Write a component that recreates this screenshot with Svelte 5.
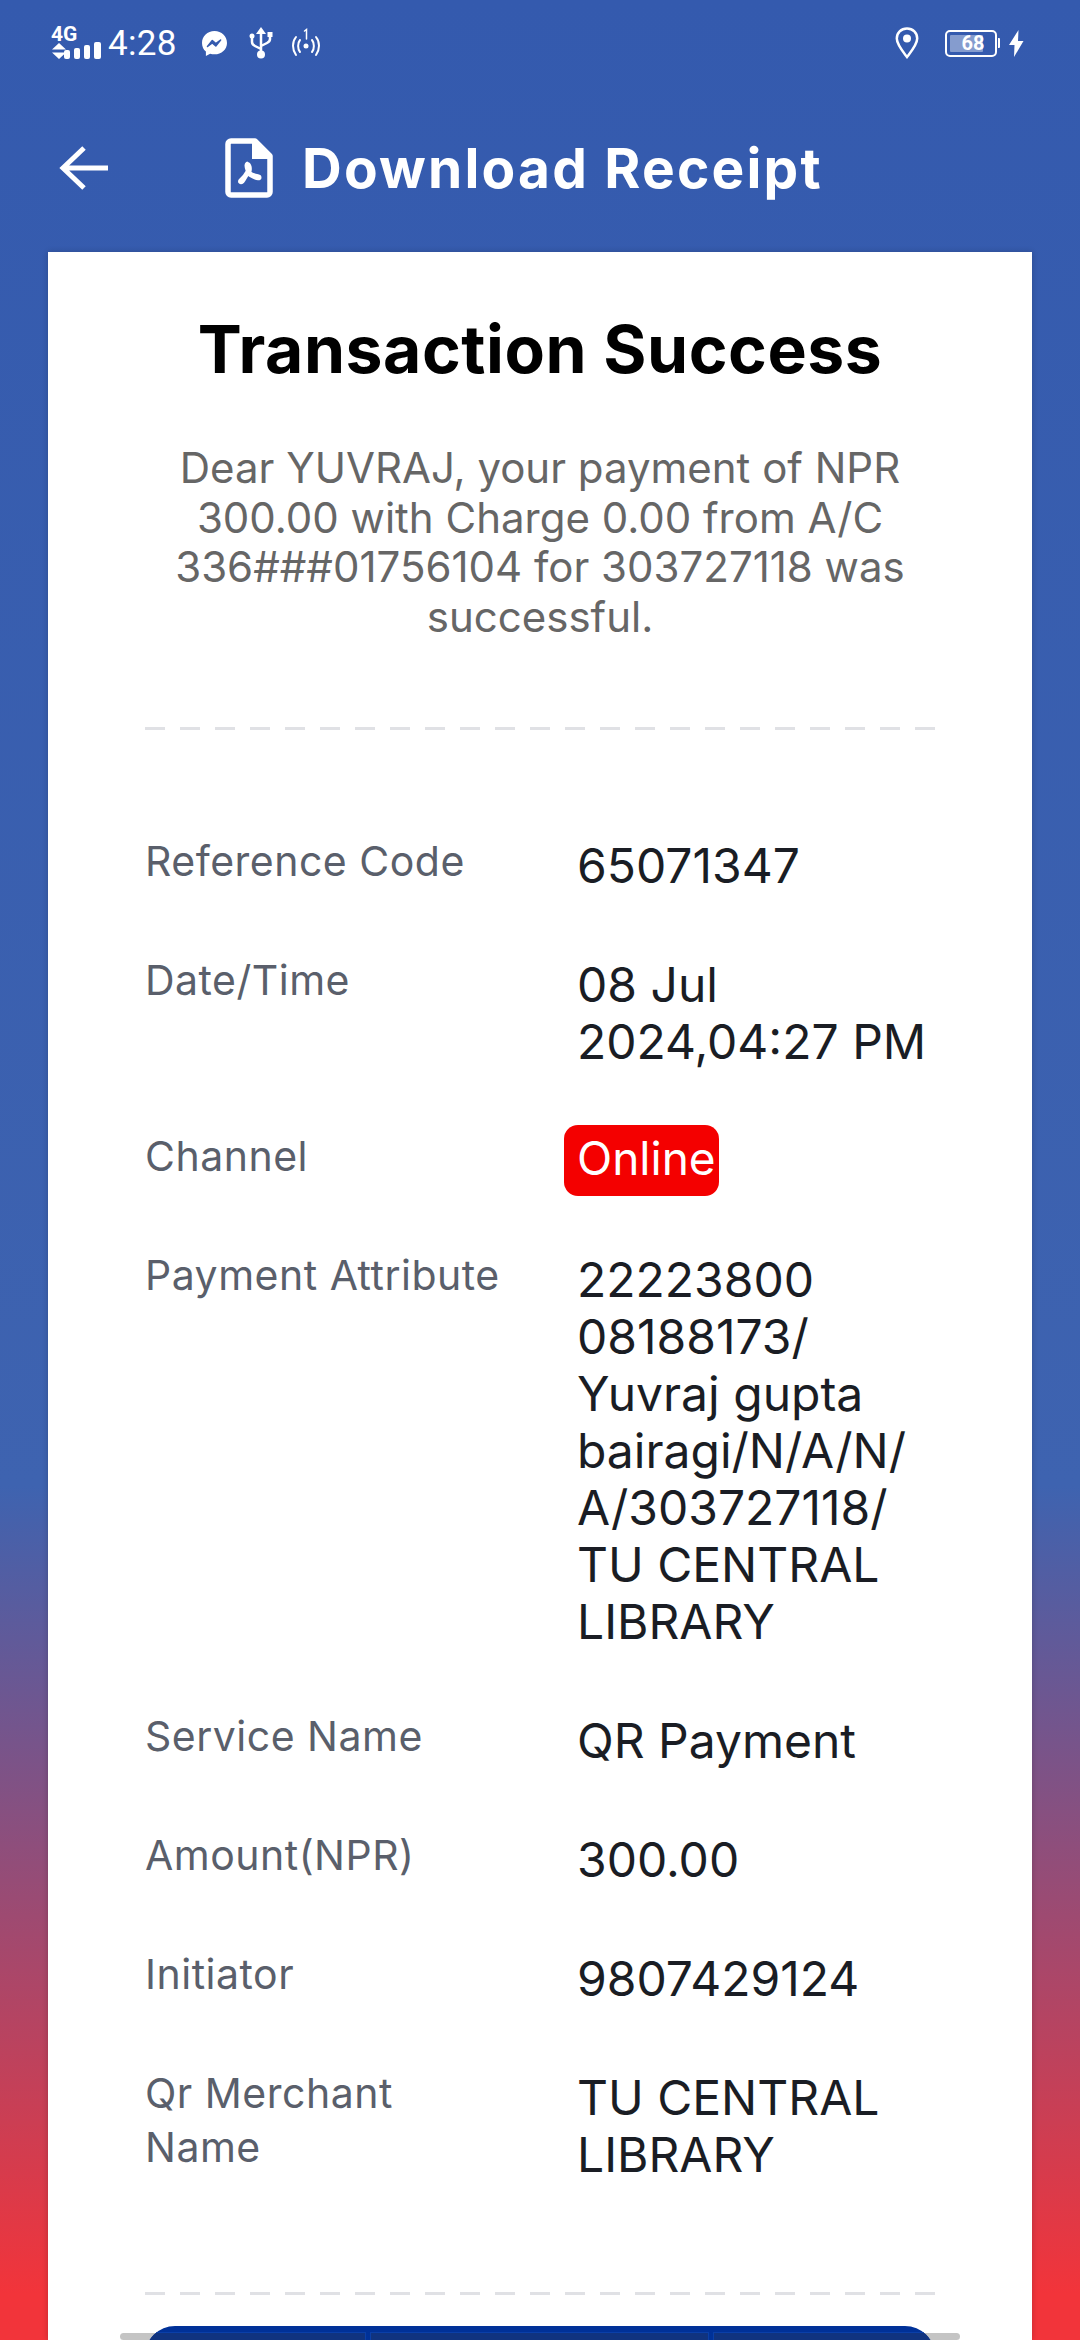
<script>
  const rows = [
    { label: 'Reference Code', value: '65071347' },
    { label: 'Date/Time', value: '08 Jul\n2024,04:27 PM' },
    { label: 'Channel', value: 'Online', badge: true },
    { label: 'Payment Attribute', value: '22223800\n08188173/\nYuvraj gupta\nbairagi/N/A/N/\nA/303727118/\nTU CENTRAL\nLIBRARY' },
    { label: 'Service Name', value: 'QR Payment' },
    { label: 'Amount(NPR)', value: '300.00' },
    { label: 'Initiator', value: '9807429124' },
    { label: 'Qr Merchant\nName', value: 'TU CENTRAL\nLIBRARY' }
  ];
</script>

<div class="page">
  <div class="status">
    <div class="signal">
      <span class="net">4G</span>
      <svg class="arrows" width="16" height="16" viewBox="0 0 16 16"><path d="M8 0l7 6.500H1zM1 9.500h14L8 16z" fill="#fff"/></svg>
      <svg class="bars" width="38" height="18" viewBox="0 0 38 18" fill="#fff">
        <rect x="0" y="9" width="6" height="9" rx="2"/>
        <rect x="10" y="7" width="6" height="11" rx="2"/>
        <rect x="20" y="4" width="6" height="14" rx="2"/>
        <rect x="30" y="1" width="7" height="17" rx="2"/>
      </svg>
    </div>
    <span class="time">4:28</span>
    <svg class="messenger" width="27" height="27" viewBox="0 0 27 27">
      <path d="M13.500 1C6.400 1 1 6.100 1 12.900c0 3.600 1.500 6.600 3.900 8.700V26l4.200-2.300c1.400.4 2.900.6 4.400.6 7.100 0 12.500-5 12.500-11.400S20.600 1 13.500 1z" fill="#fff"/>
      <path d="M6.500 16.500l4.800-6 3.500 3 4.800-3.500-4.800 6-3.500-3z" fill="#345AAE" stroke="#345AAE" stroke-width="1.500" stroke-linejoin="round"/>
    </svg>
    <svg class="usb" width="24" height="32" viewBox="0 0 24 32" fill="none" stroke="#fff" stroke-width="2.500">
      <path d="M12 0l5 7H7z" fill="#fff" stroke="none"/>
      <path d="M12 6v20M3 10v5c0 2 1 3 3 4l6 3M21 8v4c0 2-1 3-3 4l-6 3"/>
      <circle cx="3" cy="9" r="2.500" fill="#fff" stroke="none"/>
      <rect x="18.500" y="5" width="5" height="5" fill="#fff" stroke="none"/>
      <circle cx="12" cy="27.500" r="4" fill="#fff" stroke="none"/>
    </svg>
    <svg class="hotspot" width="32" height="30" viewBox="0 0 32 30" fill="none" stroke="#fff" stroke-width="2" stroke-linecap="round">
      <path d="M6 9c-4 5-4 12 0 18M10 12c-2.500 3-2.500 9 0 12M26 9c4 5 4 12 0 18M22 12c2.500 3 2.500 9 0 12"/>
      <circle cx="16" cy="18" r="2.500" fill="#fff" stroke="none"/>
      <path d="M14.500 3l2-1.500V11" stroke-width="1.500"/>
    </svg>
    <span class="spacer"></span>
    <svg class="pin" width="24" height="32" viewBox="0 0 24 32" fill="none">
      <path d="M12 1.500C6 1.500 1.800 6 1.800 11.500c0 6 6 13 10.200 18.500 4.200-5.500 10.200-12.500 10.200-18.500C22.200 6 18 1.500 12 1.500z" stroke="#fff" stroke-width="2.500"/>
      <circle cx="12" cy="11.500" r="4" fill="#fff"/>
    </svg>
    <div class="battery">
      <div class="cell"><span class="level"></span><span class="pct">68</span></div>
      <span class="nub"></span>
    </div>
    <svg class="bolt" width="15" height="27" viewBox="0 0 15 27"><path d="M9.500 0L0 15h5.500L5 27l9.500-16H9z" fill="#fff"/></svg>
  </div>

  <header class="bar">
    <svg class="back" width="50" height="44" viewBox="0 0 50 44" fill="none" stroke="#fff" stroke-width="5">
      <path d="M49 22H5M25 2L4 22l21 20"/>
    </svg>
    <svg class="pdf" width="48" height="60" viewBox="0 0 48 60" fill="none">
      <path d="M3 6a3 3 0 0 1 3-3h24l15 15v36a3 3 0 0 1-3 3H6a3 3 0 0 1-3-3z" stroke="#fff" stroke-width="5.500" stroke-linejoin="round"/>
      <path d="M27 2h4l15 15v4H27z" fill="#fff"/>
      <path d="M23 25c-2.500 0-3 3-1 8M22 33c-2 4-5 7-7 9-2 2 .5 4 3 2 2-2 3-5 5-8 2 2 7 5 10 5 3 .5 3-3 0-3.500-3-.5-6-1-8-3 1-3 1-9-3-9.500z" stroke="#fff" stroke-width="2.500" fill="#fff" stroke-linejoin="round"/>
    </svg>
    <h1>Download Receipt</h1>
  </header>

  <main class="card">
    <h2>Transaction Success</h2>
    <p class="msg">Dear YUVRAJ, your payment of NPR 300.00 with Charge 0.00 from A/C 336###01756104 for 303727118 was successful.</p>
    <div class="dash first"></div>
    <div class="rows">
      {#each rows as row}
        <div class="row">
          <div class="label">{row.label}</div>
          <div class="value" class:badge={row.badge}>{row.value}</div>
        </div>
      {/each}
    </div>
    <div class="dash last"></div>
    <div class="actions">
      <span class="track"></span>
      <div class="btns">
        <span class="btn one"></span>
        <span class="btn two"></span>
        <span class="btn three"></span>
      </div>
    </div>
  </main>
</div>

<style>
  :global(body) {
    margin: 0;
  }

  .page {
    width: 1080px;
    height: 2340px;
    overflow: hidden;
    display: flex;
    flex-direction: column;
    background: linear-gradient(180deg, #345aae 0%, #3e63b0 63.500%, #f2343a 98%);
    font-family: Inter, 'Liberation Sans', sans-serif;
  }

  .status {
    height: 85px;
    flex-shrink: 0;
    display: flex;
    align-items: center;
    padding: 1px 56px 0 51px;
    box-sizing: border-box;
    color: #fff;
    font-family: Roboto, sans-serif;
  }

  .signal {
    position: relative;
    width: 48px;
    height: 32px;
    margin-right: 9px;
  }

  .net {
    position: absolute;
    left: 0;
    top: -5px;
    font-size: 21px;
    font-weight: 700;
  }

  .arrows {
    position: absolute;
    left: 0;
    top: 16px;
  }

  .bars {
    position: absolute;
    left: 13px;
    top: 14px;
  }

  .time {
    font-size: 35px;
    font-weight: 400;
    letter-spacing: 0.3px;
  }

  .messenger { margin-left: 24px; }
  .usb { margin-left: 21px; }
  .hotspot { margin-left: 17px; }

  .spacer { flex: 1; }

  .battery {
    display: flex;
    align-items: center;
    margin-left: 26px;
  }

  .cell {
    position: relative;
    width: 52px;
    height: 27px;
    box-sizing: border-box;
    border: 2px solid #fff;
    border-radius: 5px;
    display: flex;
    align-items: center;
    justify-content: center;
  }

  .level {
    position: absolute;
    left: 3px;
    top: 3px;
    bottom: 3px;
    width: 68%;
    background: rgba(255, 255, 255, 0.4);
    border-radius: 1px;
  }

  .pct {
    position: relative;
    font-size: 20px;
    font-weight: 700;
    margin-left: 4px;
  }

  .nub {
    width: 2px;
    height: 10px;
    margin-left: 1px;
    background: #fff;
    border-radius: 0 1px 1px 0;
  }

  .bolt { margin-left: 9px; }

  .bar {
    height: 167px;
    padding-bottom: 2px;
    flex-shrink: 0;
    display: flex;
    align-items: center;
    padding-left: 59px;
    box-sizing: border-box;
    color: #fff;
  }

  .pdf { margin-left: 116px; }

  h1 {
    margin: 0 0 0 29px;
    font-size: 55px;
    font-weight: 700;
    letter-spacing: 2.2px;
    white-space: nowrap;
  }

  .card {
    flex: 1;
    margin: 0 48px;
    background: #fff;
    box-shadow: 0 0 6px rgba(0, 0, 0, 0.2);
    overflow: hidden;
    padding: 0 97px;
    box-sizing: border-box;
    display: flex;
    flex-direction: column;
  }

  h2 {
    margin: 57px -60px 0;
    font-size: 66px;
    line-height: 80px;
    font-weight: 700;
    letter-spacing: 0.55px;
    color: #000;
    text-align: center;
    white-space: nowrap;
  }

  .msg {
    margin: 54px -10px 0;
    font-size: 42px;
    line-height: 49.500px;
    color: #666;
    text-align: center;
  }

  .dash {
    height: 3px;
    flex-shrink: 0;
    background: repeating-linear-gradient(90deg, #e0e1e5 0 20px, transparent 20px 35px);
  }

  .first { margin-top: 86px; }
  .last { margin-top: 109px; }

  .rows {
    margin-top: 104px;
    display: flex;
    flex-direction: column;
    gap: 59px;
  }

  .row {
    display: flex;
  }

  .label {
    width: 432px;
    flex-shrink: 0;
    font-size: 41px;
    line-height: 54px;
    letter-spacing: 0.5px;
    color: #5a5f6b;
    white-space: pre-line;
  }

  .value {
    font-size: 48px;
    line-height: 57px;
    color: #1a1d24;
    white-space: pre-line;
    margin-top: 3px;
  }

  .badge {
    margin: -4px 0 -7px -13px;
    width: 155px;
    height: 71px;
    box-sizing: border-box;
    padding-left: 13px;
    font-size: 46px;
    line-height: 66px;
    background: #f40000;
    color: #fff;
    border-radius: 14px;
    white-space: nowrap;
  }

  .actions {
    position: relative;
    height: 60px;
    margin: 31px -25px 0;
    flex-shrink: 0;
  }

  .track {
    position: absolute;
    left: 0;
    right: 0;
    top: 7px;
    height: 7px;
    border-radius: 4px;
    background: #c4c4c4;
  }

  .btns {
    position: absolute;
    left: 25px;
    right: 25px;
    top: 0;
    height: 60px;
    border-radius: 30px 30px 0 0;
    background: #003198;
    display: flex;
    gap: 4px;
    padding-top: 6px;
    box-sizing: border-box;
    overflow: hidden;
  }

  .btn {
    background: #10337f;
    border: 1px solid #0a3fa8;
    box-sizing: border-box;
  }

  .one { width: 221px; }
  .two { width: 339px; }
  .three { flex: 1; }
</style>
